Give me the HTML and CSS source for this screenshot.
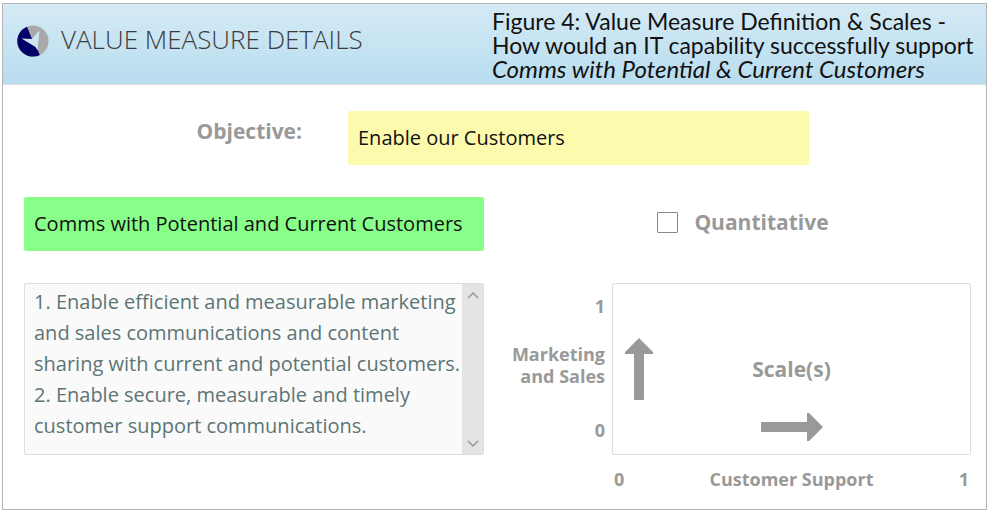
FILE: index.html
```html
<!DOCTYPE html>
<html lang="en">
<head>
<meta charset="utf-8">
<title>Value Measure Details</title>
<link rel="stylesheet" href="styles.css">
</head>
<body>
<main class="panel">
  <header class="panel-header">
    <div class="brand">
      <svg class="logo" viewBox="0 0 32 32" aria-hidden="true">
        <circle cx="16" cy="16" r="15.5" fill="#a9a9a9"/>
        <path d="M10 1.7A15.5 15.5 0 1 0 22.800 29.900L20.500 24.500L15 14Z" fill="#000066"/>
        <path d="M4.500 13.500L15 14L22.500 5.500L20.500 25.500L18.500 22Z" fill="#cde6f3"/>
      </svg>
      <h1 class="title">VALUE MEASURE DETAILS</h1>
    </div>
    <p class="caption">Figure 4: Value Measure Definition &amp; Scales -<br>How would an IT capability successfully support<br><em>Comms with Potential &amp; Current Customers</em></p>
  </header>

  <form class="content">
    <div class="objective">
      <label class="label" for="objective">Objective:</label>
      <input class="field field-yellow" id="objective" type="text" value="Enable our Customers">
    </div>

    <div class="columns">
      <input class="field field-green" type="text" aria-label="Value measure" value="Comms with Potential and Current Customers">
      <div class="option">
        <input class="checkbox" id="quantitative" type="checkbox">
        <label class="label" for="quantitative">Quantitative</label>
      </div>

      <div class="description">
        <textarea class="description-text" rows="5" aria-label="Description">1. Enable efficient and measurable marketing
and sales communications and content
sharing with current and potential customers.
2. Enable secure, measurable and timely
customer support communications.</textarea>
        <div class="scrollbar">
          <button class="scroll-button" type="button" aria-label="Scroll up"><svg viewBox="0 0 12 8"><path d="M1 7L6 2L11 7"/></svg></button>
          <button class="scroll-button" type="button" aria-label="Scroll down"><svg viewBox="0 0 12 8"><path d="M1 1L6 6L11 1"/></svg></button>
        </div>
      </div>

      <div class="chart">
        <div class="y-axis">
          <span>1</span>
          <span class="y-title">Marketing<br>and Sales</span>
          <span>0</span>
        </div>
        <div class="plot">
          <svg class="arrow-up" viewBox="0 0 28 62" aria-hidden="true"><path d="M14 0L28 14V16H19V61Q19 62 18 62H10Q9 62 9 61V16H0V14Z"/></svg>
          <span class="plot-title">Scale(s)</span>
          <svg class="arrow-right" viewBox="0 0 62 28" aria-hidden="true"><path d="M62 14L48 28H46V19H1Q0 19 0 18V10Q0 9 1 9H46V0H48Z"/></svg>
        </div>
        <div class="x-axis">
          <span>0</span>
          <span>Customer Support</span>
          <span>1</span>
        </div>
      </div>
    </div>
  </form>
</main>
</body>
</html>
```
FILE: styles.css
```css
* {
  box-sizing: border-box;
}

body {
  margin: 0;
  padding: 3px 1px 0 2px;
  background: #fff;
  color: #999;
  font-family: "Open Sans", "Noto Sans", sans-serif;
}

.panel {
  border: 1px solid #b4b6b8;
  padding-bottom: 19px;
}

.panel-header {
  display: grid;
  grid-template-columns: 489fr 494fr;
  align-items: center;
  height: 81px;
  border-bottom: 1px solid #dcdcdc;
  background: linear-gradient(#d5eaf5, #b8ddef);
}

.brand {
  display: flex;
  align-items: center;
  gap: 12px;
  padding: 0 0 6px 14px;
}

.logo {
  width: 32px;
  height: 32px;
}

.title {
  margin: 0;
  color: #3c3c3c;
  font-size: 26px;
  font-weight: 300;
  line-height: 36px;
  padding-bottom: 4px;
}

.caption {
  margin: 0;
  padding-top: 2px;
  color: #111;
  font-family: Lato, "Open Sans", sans-serif;
  font-size: 23px;
  line-height: 24px;
  white-space: nowrap;
}

.caption em {
  font-size: 24px;
}

.content {
  padding: 26px 15px 0 21px;
}

.objective {
  display: grid;
  grid-template-columns: 278fr 461fr 162fr;
  column-gap: 46px;
  margin-right: -46px;
}

.objective .label {
  justify-self: end;
  padding-top: 6px;
}

.label {
  font-size: 21px;
  font-weight: 700;
  line-height: 28px;
}

.field {
  width: 100%;
  height: 54px;
  border: 0;
  border-radius: 2px;
  padding: 0 10px 2px;
  color: #111;
  font-family: inherit;
  font-size: 20px;
}

.field-yellow {
  background: #fbfaad;
}

.field-green {
  background: #88ff88;
}

.columns {
  display: grid;
  grid-template-columns: 1fr 1fr;
  gap: 32px 27px;
  margin-top: 32px;
}

.option {
  display: flex;
  align-items: center;
  justify-content: center;
  gap: 16px;
  padding: 0 0 4px 4px;
}

.checkbox {
  appearance: none;
  width: 21px;
  height: 21px;
  margin: 0;
  border: 1px solid #888;
  border-radius: 1px;
  background: #fff;
}

.description {
  display: flex;
  align-self: start;
  height: 172px;
  border: 1px solid #ddd;
  border-radius: 2px;
  background: #fafafa;
}

.description-text {
  flex: 1;
  min-width: 0;
  border: 0;
  padding: 2px 0 0 9px;
  overflow: hidden;
  resize: none;
  background: transparent;
  color: #5c7575;
  font-family: inherit;
  font-size: 20px;
  line-height: 31px;
  white-space: pre;
}

.scrollbar {
  display: flex;
  flex-direction: column;
  justify-content: space-between;
  width: 21px;
  background: #e4e4e4;
}

.scroll-button {
  display: grid;
  place-items: center;
  height: 21px;
  border: 0;
  padding: 0;
  background: transparent;
}

.scroll-button svg {
  width: 12px;
  height: 8px;
  fill: none;
  stroke: #999;
  stroke-width: 1.5;
}

.chart {
  display: grid;
  grid-template: 172px auto / 94px 1fr;
  gap: 13px 7px;
  font-size: 18px;
  font-weight: 700;
  line-height: 22px;
}

.y-axis {
  display: flex;
  flex-direction: column;
  justify-content: space-between;
  padding: 12px 0 14px;
  text-align: right;
}

.y-title {
  padding-bottom: 6px;
}

.plot {
  display: grid;
  grid-template: 54px 62px 54px / 52px 1fr 52px;
  place-items: center;
  border: 1px solid #ddd;
  border-radius: 2px;
}

.arrow-up {
  grid-area: 2 / 1;
  width: 28px;
  height: 62px;
}

.plot-title {
  grid-area: 2 / 2;
  font-size: 21px;
}

.arrow-right {
  grid-area: 3 / 2;
  width: 62px;
  height: 28px;
}

.plot svg {
  fill: #999;
}

.x-axis {
  grid-column: 2;
  display: flex;
  justify-content: space-between;
  padding: 0 2px;
}
```
